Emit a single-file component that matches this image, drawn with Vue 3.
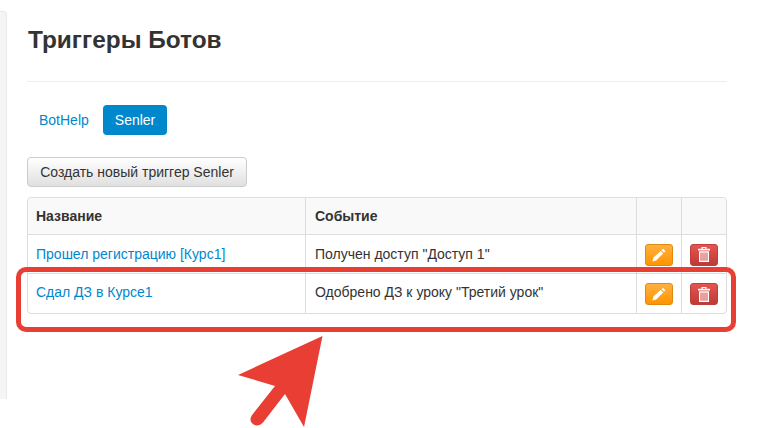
<template>
  <div class="page">
    <aside class="rail"></aside>
    <main class="content">
      <h1>Триггеры Ботов</h1>
      <hr />
      <nav class="pills">
        <a class="pill">BotHelp</a>
        <a class="pill active">Senler</a>
      </nav>
      <button class="create">Создать новый триггер Senler</button>
      <table>
        <thead>
          <tr>
            <th class="c1">Название</th>
            <th class="c2">Событие</th>
            <th class="c3"></th>
            <th class="c4"></th>
          </tr>
        </thead>
        <tbody>
          <tr v-for="r in rows" :key="r.name">
            <td><a>{{ r.name }}</a></td>
            <td class="ev">{{ r.event }}</td>
            <td class="act">
              <span class="btn edit">
                <svg width="14" height="14" viewBox="0 0 14 14"><path fill="#fff" d="M11 .8l2.400 2.400-1.400 1.400-2.400-2.400zM8.800 3l2.400 2.400-7 7-3.800 1 1-3.800z" /></svg>
              </span>
            </td>
            <td class="act">
              <span class="btn del">
                <svg width="12" height="15" viewBox="0 0 12 15"><path fill="#fff" fill-rule="evenodd" d="M3.500 0h5v1.800H12v1.600H0V1.800h3.500zM4.800 1v.8h2.400V1zM1 4.200h10V15H1zM2.500 5.500v8.200h1v-8.200zM4.500 5.500v8.200h1v-8.200zM6.500 5.500v8.200h1v-8.200zM8.500 5.500v8.200h1v-8.200z" /></svg>
              </span>
            </td>
          </tr>
        </tbody>
      </table>
    </main>
    <div class="highlight"></div>
    <svg class="arrow" width="110" height="110" viewBox="0 0 110 110">
      <path fill="#e83e33" d="M102.500 16 18 55 55 66 32.500 94.500C29.500 98.500 30 102 33 104 36 106.500 40 105.500 43 102.500L65 74 84 107Z" />
    </svg>
  </div>
</template>

<script setup>
const rows = [
  { name: 'Прошел регистрацию [Курс1]', event: 'Получен доступ "Доступ 1"' },
  { name: 'Сдал ДЗ в Курсе1', event: 'Одобрено ДЗ к уроку "Третий урок"' },
]
</script>

<style>
html, body { background: #fff; }
</style>

<style scoped>
.page {
  position: relative;
  width: 780px;
  height: 428px;
  overflow: hidden;
  display: flex;
  align-items: flex-start;
  font-family: "Liberation Sans", Arial, sans-serif;
  font-size: 14px;
  line-height: 20px;
  color: #333;
  background: #fff;
}
.rail {
  flex: none;
  width: 7px;
  height: 388px;
  margin-top: 11px;
  box-sizing: border-box;
  background: #f5f5f5;
  border: 1px solid #e8e8e8;
  border-left: 0;
  border-bottom: 0;
  border-radius: 0 4px 0 0;
}
.content {
  flex: none;
  width: 700px;
  margin-left: 20px;
}
h1 {
  margin: 24px 0 0 1px;
  font-size: 24.400px;
  line-height: 32px;
  font-weight: 700;
  color: #333;
}
hr {
  margin: 25px 0 0;
  border: 0;
  border-top: 1px solid #eee;
}
.pills {
  display: flex;
  gap: 2px;
  margin-top: 23px;
}
.pill {
  padding: 5px 12px;
  border-radius: 4px;
  color: #0088cc;
}
.pill.active {
  background: #0088cc;
  color: #fff;
}
.create {
  display: block;
  margin-top: 22px;
  width: 220px;
  height: 30px;
  padding: 0;
  font: 14px/20px "Liberation Sans", Arial, sans-serif;
  color: #333;
  background: linear-gradient(#fff, #e0e0e0);
  border: 1px solid #ccc;
  border-radius: 4px;
}
table {
  margin-top: 10px;
  width: 700px;
  box-sizing: border-box;
  table-layout: fixed;
  border-collapse: separate;
  border-spacing: 0;
  border: 1px solid #ddd;
  border-radius: 4px;
}
.c1 { width: 277px; }
.c2 { width: 331px; }
.c3 { width: 45px; }
.c4 { width: 45px; }
th, td {
  box-sizing: border-box;
  padding: 0 8px;
  text-align: left;
  border-left: 1px solid #ddd;
  border-top: 1px solid #ddd;
}
th:first-child, td:first-child { border-left: 0; }
thead th {
  border-top: 0;
  height: 36px;
  background: #f9f9f9;
}
thead th:first-child { border-top-left-radius: 4px; }
thead th:last-child { border-top-right-radius: 4px; }
th.c2, td.ev { padding-left: 9px; }
tbody td { height: 39px; padding-bottom: 1px; }
tbody tr:last-child td { height: 40px; padding-bottom: 3px; }
td a { color: #0088cc; }
td.act, tbody tr:last-child td.act { padding: 1px 0 0; text-align: center; vertical-align: middle; }
.btn {
  display: flex;
  align-items: center;
  justify-content: center;
  box-sizing: border-box;
  width: 28px;
  height: 22px;
  margin: 0 auto;
  border-radius: 3px;
}
.edit {
  background: linear-gradient(#ffb040, #ff9500);
  border: 1px solid #e08a10;
}
.del {
  background: linear-gradient(#e65550, #bd3a36);
  border: 1px solid #bd3f3a;
}
.highlight {
  position: absolute;
  left: 16px;
  top: 267px;
  width: 720px;
  height: 65px;
  box-sizing: border-box;
  border: 5px solid #e83e33;
  border-radius: 10px;
}
.arrow {
  position: absolute;
  left: 220px;
  top: 320px;
}
</style>
